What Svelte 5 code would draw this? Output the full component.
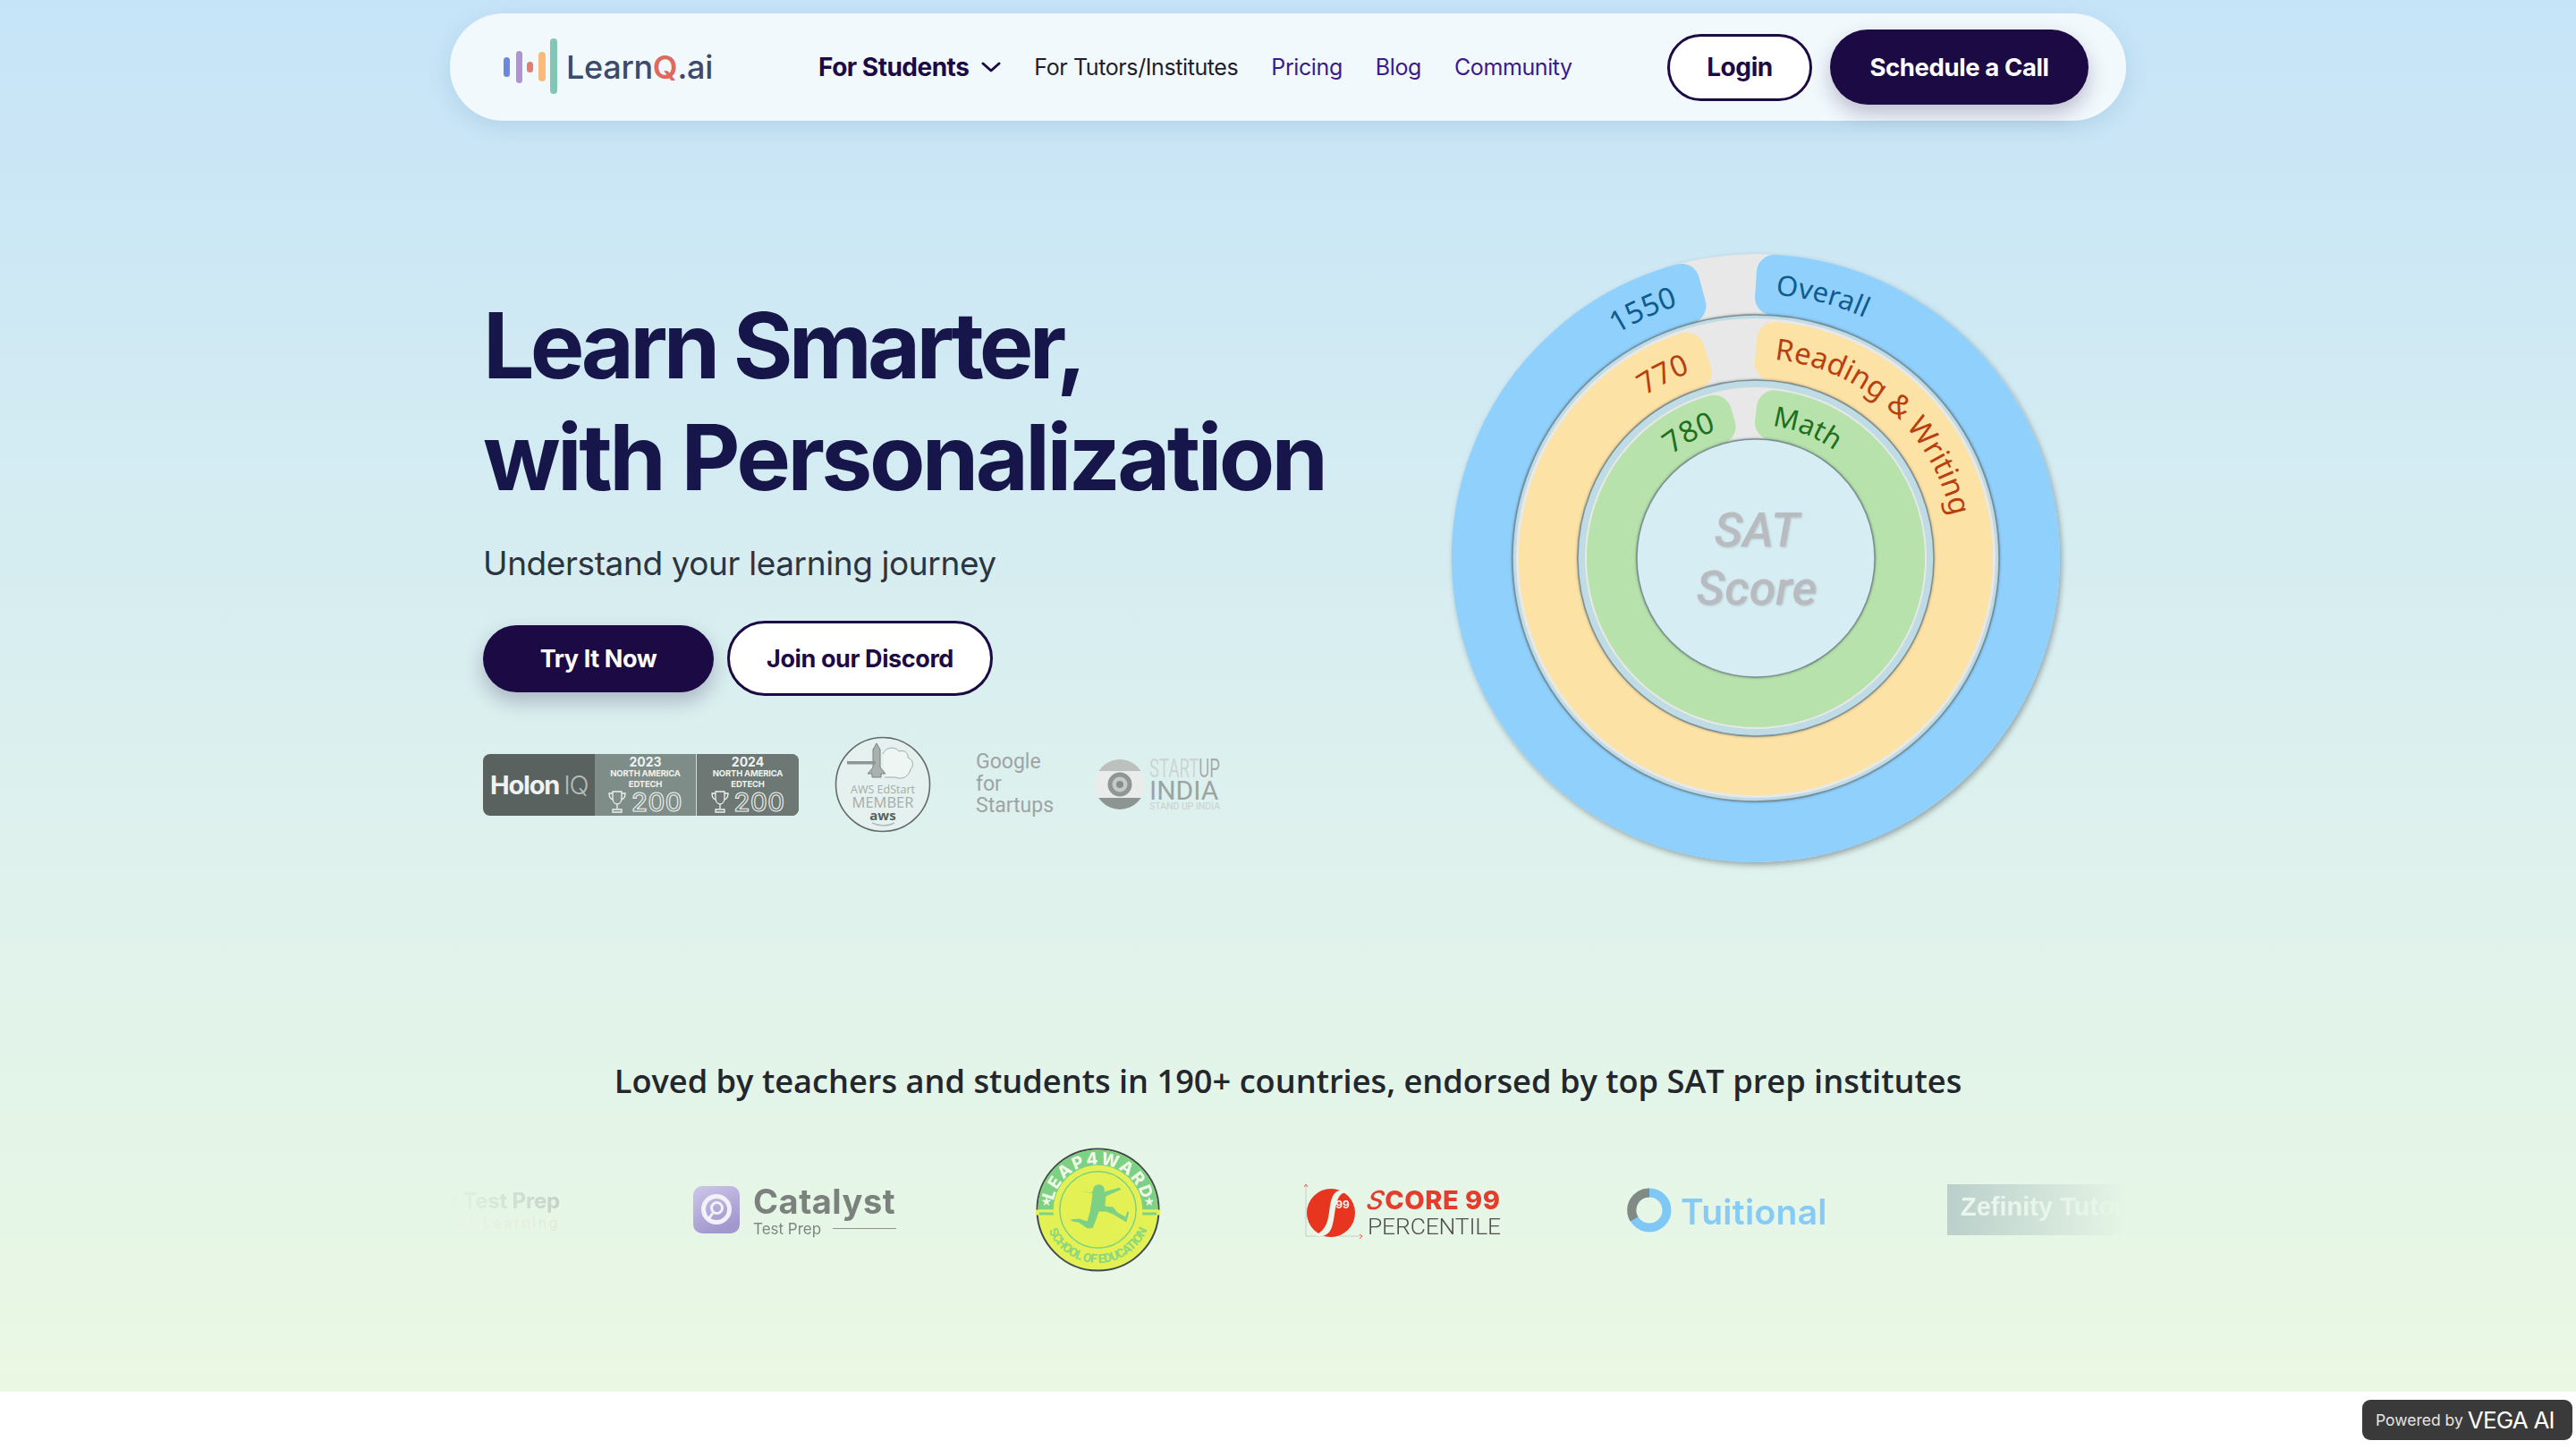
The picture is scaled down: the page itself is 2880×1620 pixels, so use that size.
<script>
  const C = 350;
  const pt = (r, a) => {
    const t = ((a - 90) * Math.PI) / 180;
    return [C + r * Math.cos(t), C + r * Math.sin(t)];
  };
  const arc = (r, a0, a1) => {
    const [x0, y0] = pt(r, a0);
    const [x1, y1] = pt(r, a1);
    return `M${x0.toFixed(2)} ${y0.toFixed(2)}A${r} ${r} 0 ${Math.abs(a1 - a0) > 180 ? 1 : 0} 1 ${x1.toFixed(2)} ${y1.toFixed(2)}`;
  };
  const sector = (ro, ri, a0, a1, c) => {
    const rO = ro - c, rI = ri + c;
    const m = (ro + ri) / 2;
    const d = (c / m) * (180 / Math.PI);
    const s = a0 + d, e = a1 - d;
    const [x0, y0] = pt(rO, s), [x1, y1] = pt(rO, e), [x2, y2] = pt(rI, e), [x3, y3] = pt(rI, s);
    return `M${x0} ${y0}A${rO} ${rO} 0 1 1 ${x1} ${y1}L${x2} ${y2}A${rI} ${rI} 0 1 0 ${x3} ${y3}Z`;
  };
  const rings = [
    { cls: 'blue', ro: 340, ri: 272, end: 348.75, disc: 272, track: 340, label: 'Overall', lr: 295, la: 4.3, score: '1550', sr: 295, sa: -31.8 },
    { cls: 'gold', ro: 265, ri: 199, end: 346.5, disc: 199, track: 268, label: 'Reading & Writing', lr: 223, la: 5.4, score: '770', sr: 220, sa: -34.2 },
    { cls: 'green', ro: 189, ri: 133, end: 351, disc: 133, track: 191, label: 'Math', lr: 149, la: 7, score: '780', sr: 149, sa: -39 }
  ];
  const awards = ['2023', '2024'];
</script>

<div class="page">
  <nav class="nav">
    <a class="brand" href="#top">
      <svg class="brand-mark" viewBox="0 0 62 64" aria-hidden="true">
        <rect x="0" y="21" width="7" height="22" rx="3.5" fill="#6d88da" />
        <rect x="14" y="14" width="7" height="36" rx="3.5" fill="#b192d2" />
        <rect x="26" y="26" width="7" height="12" rx="3.5" fill="#e27d72" />
        <rect x="39" y="15" width="8" height="33" rx="4" fill="#f8bb7c" />
        <rect x="52" y="0" width="8" height="62" rx="4" fill="#84c6b6" />
      </svg>
      <span>Learn<b>Q</b>.ai</span>
    </a>
    <div class="links">
      <a class="strong" href="#top">For Students
        <svg class="chev" viewBox="0 0 22 12" aria-hidden="true"><path d="M2 2l9 8 9-8" /></svg>
      </a>
      <a class="dark" href="#top">For Tutors/Institutes</a>
      <a href="#top">Pricing</a>
      <a href="#top">Blog</a>
      <a href="#top">Community</a>
    </div>
    <div class="actions">
      <button class="btn ghost login">Login</button>
      <button class="btn solid call">Schedule a Call</button>
    </div>
  </nav>

  <section class="hero">
    <div class="copy">
      <h1><span class="l1">Learn Smarter,</span><span class="l2">with Personalization</span></h1>
      <p class="sub">Understand your learning journey</p>
      <div class="cta">
        <button class="btn solid try">Try It Now</button>
        <button class="btn ghost join">Join our Discord</button>
      </div>
      <div class="badges">
        <div class="holon">
          <div class="holon-name">Holon<i>IQ</i></div>
          {#each awards as year, i}
            <div class="award" class:alt={i === 1}>
              <strong>{year}</strong>
              <span>NORTH AMERICA</span>
              <span>EDTECH</span>
              <div class="award-foot">
                <svg viewBox="0 0 20 25" aria-hidden="true"><path d="M5 1h10v7c0 4-2 7-5 7s-5-3-5-7zM5 3H1c0 4 1 6 4 7M15 3h4c0 4-1 6-4 7M10 15v5M5 24v-3h10v3z" /></svg>
                <em>200</em>
              </div>
            </div>
          {/each}
        </div>
        <svg class="aws" viewBox="0 0 108 108">
          <circle cx="54" cy="54" r="52.5" class="aws-disc" />
          <path class="aws-cloud" d="M54 20c3-8 14-9 18-3 6-2 11 2 10 7 6 2 7 9 3 13-2 9-10 12-17 9H56" />
          <path class="aws-fill" d="M47 8l4 7v20l6 7h-5v4h-10v-4h-5l6-7V15z" />
          <rect x="14" y="28" width="32" height="3.5" class="aws-bar" />
          <text x="54" y="64" class="aws-t1">AWS EdStart</text>
          <text x="54" y="80" class="aws-t2">MEMBER</text>
          <text x="54" y="94" class="aws-t3">aws</text>
          <path class="aws-smile" d="M42 97c8 4 18 4 25 0" />
        </svg>
        <div class="google"><span>Google</span><span>for</span><span>Startups</span></div>
        <div class="india">
          <svg viewBox="0 0 56 56" aria-hidden="true">
            <defs><clipPath id="flag"><circle cx="28" cy="28" r="28" /></clipPath></defs>
            <g clip-path="url(#flag)">
              <rect width="56" height="56" fill="#e9ecea" />
              <rect width="56" height="13" fill="#bcc1bf" />
              <rect y="43" width="56" height="13" fill="#8d9593" />
            </g>
            <circle cx="28" cy="28" r="13.5" fill="#8f9694" />
            <circle cx="28" cy="28" r="8.5" fill="#c5cac8" />
            <circle cx="28" cy="28" r="4" fill="#868e8c" />
          </svg>
          <div class="india-text">
            <div class="startup"><span>START</span><b>UP</b></div>
            <div class="india-name">INDIA</div>
            <div class="standup">STAND UP INDIA</div>
          </div>
        </div>
      </div>
    </div>

    <svg class="score" viewBox="0 0 700 700">
      <defs>
        {#each rings as r, i}
          <path id={`lab${i}`} d={arc(r.lr, r.la, r.la + 120)} />
          <path id={`num${i}`} d={arc(r.sr, r.sa, r.sa + 60)} />
        {/each}
      </defs>
      {#each rings as r, i}
        <circle cx={C} cy={C} r={r.track} class="track" class:first={i === 0} />
        <path class={`arc ${r.cls}`} d={sector(r.ro, r.ri, 0, r.end, 20)} />
        <text class={`lbl ${r.cls}-t ${r.cls}-l`}><textPath href={`#lab${i}`}>{r.label}</textPath></text>
        <text class={`num ${r.cls}-t`}><textPath href={`#num${i}`}>{r.score}</textPath></text>
        <circle cx={C} cy={C} r={r.disc} class="disc" class:core={i === 2} />
      {/each}
      <text x="351" y="337" class="sat">SAT</text>
      <text x="351" y="402" class="sat">Score</text>
    </svg>
  </section>

  <h2 class="loved">Loved by teachers and students in 190+ countries, endorsed by top SAT prep institutes</h2>

  <div class="marquee">
    <div class="logo frag">
      <div class="frag-a">Smart Test Prep</div>
      <div class="frag-b">Better Learning</div>
    </div>

    <div class="logo catalyst">
      <svg viewBox="0 0 52 53" aria-hidden="true">
        <defs><linearGradient id="cat" x1="0" y1="0" x2="0.4" y2="1"><stop offset="0" stop-color="#ccc6ea" /><stop offset="1" stop-color="#a398cd" /></linearGradient></defs>
        <rect width="52" height="53" rx="10" fill="url(#cat)" />
        <circle cx="26" cy="26" r="14.5" class="cat-ring" />
        <circle cx="26.5" cy="24.5" r="6" class="cat-ring thin" />
        <path d="M22 30l-5 7" class="cat-ring thin" />
      </svg>
      <div class="cat-text">
        <div class="cat-name">Catalyst</div>
        <div class="cat-sub"><span>Test Prep</span><i></i></div>
      </div>
    </div>

    <svg class="logo leap" viewBox="0 0 140 140">
      <defs>
        <clipPath id="leapTop"><rect width="140" height="70" /></clipPath>
        <path id="leapA" d="M19 70a51 51 0 0 1 102 0" />
        <path id="leapB" d="M10 70a60 60 0 0 0 120 0" />
      </defs>
      <circle cx="70" cy="70" r="68.5" class="leap-base" />
      <circle cx="70" cy="70" r="67.5" class="leap-green" clip-path="url(#leapTop)" />
      <circle cx="70" cy="70" r="50" class="leap-yellow" />
      <rect x="0" y="70" width="140" height="6" class="leap-yellow" />
      <circle cx="70" cy="70" r="43" class="leap-ring" />
      <rect x="4" y="73" width="16" height="3" class="leap-mark" />
      <rect x="120" y="73" width="16" height="3" class="leap-mark" />
      <text class="leap-w"><textPath href="#leapA" startOffset="50%">LEAP4WARD</textPath></text>
      <text x="12" y="65" class="leap-star">★</text>
      <text x="128" y="65" class="leap-star">★</text>
      <text class="leap-g"><textPath href="#leapB" startOffset="50%">SCHOOL OF EDUCATION</textPath></text>
      <circle cx="71" cy="48" r="6.5" class="leap-mark" />
      <path class="leap-mark" d="M47 48l14 3 3-2 12 1 18-5 2 2-17 8-1 11 9 1 5 6 9 5 2-6 2 1-3 11-15-9-8-3-8 0-3 9-4 10-6 0-10-7-7-1-2-2 10-1 9 3 3-11 2-12 1-9-12-2z" />
    </svg>

    <div class="logo score99">
      <svg viewBox="0 0 66 66" aria-hidden="true">
        <path class="axis" d="M2 3v57h62" />
        <path class="axis-r" d="M0 5l2-3 2 3M62 58l3 2-3 3" />
        <circle cx="30" cy="34" r="27" fill="#e8351f" />
        <path d="M46 8c-12 0-15 6-17 18-2 13-2 27-17 33 8 3 16 0 19-9 3-9 3-20 6-29 2-7 6-11 16-10z" fill="#eef6ea" />
        <text x="43" y="29" class="s99">99</text>
      </svg>
      <div class="s-text">
        <div class="s-title"><span>S</span>CORE 99</div>
        <div class="s-sub">PERCENTILE</div>
      </div>
    </div>

    <div class="logo tuitional">
      <svg viewBox="0 0 50 50" aria-hidden="true">
        <circle cx="25" cy="25" r="19.5" class="t-blue" />
        <path d="M25 5.5A19.5 19.5 0 0 0 8 35" class="t-gray" />
      </svg>
      <span>Tuitional</span>
    </div>

    <div class="logo zefinity"><span>Zefinity Tutoring</span></div>
  </div>
</div>

<div class="powered"><span>Powered by</span><b>VEGA AI</b></div>

<style>
  :global(body) { margin: 0; background: #fff; }
  .page {
    height: 1556px;
    background: linear-gradient(180deg, #c6e4f8 0%, #dcf0ee 55%, #eaf8e3 100%);
    display: flex;
    flex-direction: column;
    align-items: center;
    font-family: Inter, "Liberation Sans", sans-serif;
    overflow: hidden;
  }
  a { text-decoration: none; color: inherit; }

  .nav {
    box-sizing: border-box;
    width: 1874px;
    height: 120px;
    margin-top: 15px;
    padding: 0 42px 0 60px;
    display: flex;
    align-items: center;
    background: #f2f9fd;
    border-radius: 60px;
    box-shadow: 0 8px 26px rgba(70, 120, 170, 0.16);
    flex-shrink: 0;
  }
  .brand { display: flex; align-items: center; gap: 8px; width: 352px; font-size: 36px; font-weight: 500; color: #3c4b6c; letter-spacing: -0.3px; }
  .brand b { color: #e0695f; font-weight: 600; }
  .brand-mark { width: 62px; height: 64px; }
  .links { display: flex; align-items: center; gap: 37px; font-size: 25px; color: #3c1a8a; letter-spacing: -0.4px; }
  .links .dark { color: #1e1e2c; }
  .links .strong { display: flex; align-items: center; gap: 14px; font-weight: 700; color: #1c0a45; font-size: 28px; letter-spacing: -0.5px; }
  .chev { width: 22px; height: 12px; fill: none; stroke: #1c0a45; stroke-width: 3; stroke-linecap: round; stroke-linejoin: round; }
  .actions { margin-left: auto; display: flex; align-items: center; gap: 20px; }

  .btn { font-family: inherit; font-weight: 700; font-size: 27px; border-radius: 999px; cursor: pointer; letter-spacing: -0.4px; padding: 0; box-sizing: border-box; }
  .solid { background: #1c0a45; color: #fff; border: 0; box-shadow: 0 10px 22px rgba(28, 10, 69, 0.25); }
  .ghost { background: #fff; color: #1c0a45; border: 3px solid #1c0a45; }
  .login { width: 162px; height: 75px; font-size: 28px; }
  .call { width: 289px; height: 84px; font-size: 27.5px; }

  .hero { width: 1874px; display: flex; margin-top: 139px; flex-shrink: 0; }
  .copy { box-sizing: border-box; width: 1110px; padding: 50px 0 0 37px; }
  h1 { margin: 0; font-size: 102px; line-height: 125px; font-weight: 700; color: #16164a; }
  h1 span { display: block; white-space: nowrap; }
  .l1 { letter-spacing: -4.8px; }
  .l2 { letter-spacing: -3.6px; }
  .sub { margin: 32px 0 0; font-size: 37px; line-height: 48px; color: #2c3440; letter-spacing: -0.4px; }
  .cta { display: flex; align-items: center; gap: 15px; margin-top: 40px; }
  .try { width: 258px; height: 75px; }
  .join { width: 297px; height: 84px; }

  .badges { display: flex; align-items: center; margin-top: 45px; height: 108px; }
  .holon { display: flex; width: 353px; height: 69px; border-radius: 8px; overflow: hidden; color: #eef3f1; background: #59625f; }
  .holon-name { width: 125px; box-sizing: border-box; padding-left: 8px; font-size: 29px; font-weight: 700; line-height: 69px; letter-spacing: -1.2px; white-space: nowrap; }
  .holon-name i { font-style: normal; font-weight: 300; color: #b4bbb8; margin-left: 5px; }
  .award { width: 114px; background: #7f8d89; display: flex; flex-direction: column; align-items: center; border-right: 1.5px solid #d4dcd9; box-sizing: border-box; padding-top: 1px; }
  .award.alt { background: #6d7773; border-right: 0; }
  .award strong { font-size: 14px; line-height: 15px; }
  .award span { font-size: 9.5px; font-weight: 700; line-height: 12px; letter-spacing: -0.2px; white-space: nowrap; }
  .award-foot { display: flex; align-items: center; gap: 6px; height: 27px; }
  .award-foot svg { width: 20px; height: 25px; fill: none; stroke: #eef3f1; stroke-width: 1.3; }
  .award-foot em { font-style: normal; font-size: 29px; line-height: 27px; font-weight: 500; color: transparent; -webkit-text-stroke: 1.1px #eef3f1; letter-spacing: 0.5px; }

  .aws { width: 108px; height: 108px; margin-left: 40px; }
  .aws-disc { fill: #e5f1ee; stroke: #626c6a; stroke-width: 1.6; }
  .aws-cloud { fill: #eef5f3; stroke: #a2aaa8; stroke-width: 1; }
  .aws-fill { fill: #a9b1af; stroke: #7b8482; stroke-width: 1; }
  .aws-bar { fill: #8d9694; }
  .aws-t1, .aws-t2, .aws-t3 { text-anchor: middle; font-family: "Open Sans", sans-serif; fill: #a5acaa; }
  .aws-t1 { font-size: 12.5px; }
  .aws-t2 { font-size: 16.5px; }
  .aws-t3 { font-size: 15px; font-weight: 700; fill: #59625f; }
  .aws-smile { fill: none; stroke: #b4bbb9; stroke-width: 1.5; }

  .google { display: flex; flex-direction: column; margin-left: 50px; font-family: Roboto, sans-serif; font-size: 23px; line-height: 24.5px; color: #9ea4a3; width: 133px; }
  .india { display: flex; align-items: center; gap: 5px; }
  .india svg { width: 56px; height: 56px; }
  .india-text { display: flex; flex-direction: column; width: 78px; font-family: Roboto, sans-serif; color: #9ca3a1; }
  .startup { font-size: 29px; line-height: 24px; color: #cdd4d2; white-space: nowrap; transform: scaleX(0.64); transform-origin: left center; }
  .startup b { font-weight: 400; color: #a6acab; }
  .india-name { font-size: 30px; line-height: 26px; }
  .standup { font-size: 10.5px; line-height: 10px; color: #c8d0ce; white-space: nowrap; }

  .score { width: 700px; height: 700px; flex-shrink: 0; }
  .track { fill: #e8e8e8; }
  .track.first { filter: drop-shadow(2px 3px 3px rgba(40, 50, 60, 0.4)); }
  .disc { fill: #bfdbe4; stroke: rgba(105, 125, 135, 0.75); stroke-width: 1.5; filter: drop-shadow(0 0 1.5px rgba(30, 40, 50, 0.5)); }
  .disc.core { fill: #d5edf3; }
  .arc { stroke-width: 40; stroke-linejoin: round; }
  .blue { fill: #90d0fc; stroke: #90d0fc; }
  .gold { fill: #fde2a6; stroke: #fde2a6; }
  .green { fill: #b7e2ab; stroke: #b7e2ab; }
  .lbl, .num { font-family: "Noto Sans", sans-serif; font-size: 31px; }
  .num { font-size: 33px; }
  .gold-l { font-size: 33px; }
  .blue-t { fill: #0f5b8e; }
  .gold-t { fill: #b8400e; }
  .green-t { fill: #1f6f1f; }
  .sat { font-family: Roboto, sans-serif; font-size: 54px; font-style: italic; font-weight: 500; fill: #b8bbbf; text-anchor: middle; filter: drop-shadow(1px 1px 1px rgba(120, 120, 120, 0.3)); }

  .loved { margin: 210px 0 0; font-family: "Open Sans", sans-serif; font-size: 36.2px; line-height: 48px; font-weight: 600; color: #23262c; flex-shrink: 0; }

  .marquee {
    width: 1874px;
    height: 139px;
    margin-top: 51px;
    display: flex;
    align-items: center;
    gap: 140px;
    overflow: hidden;
    flex-shrink: 0;
    -webkit-mask-image: linear-gradient(90deg, transparent, #000 15%, #000 85%, transparent);
    mask-image: linear-gradient(90deg, transparent, #000 15%, #000 85%, transparent);
  }
  .logo { flex-shrink: 0; box-sizing: border-box; }
  .frag { width: 132px; padding-right: 9px; overflow: hidden; display: flex; flex-direction: column; align-items: flex-end; white-space: nowrap; }
  .frag-a { font-size: 24px; font-weight: 700; color: #9aa39f; letter-spacing: -0.2px; }
  .frag-b { font-size: 16px; color: #e7d3b4; letter-spacing: 2.5px; }

  .catalyst { width: 243px; display: flex; align-items: center; gap: 15px; }
  .catalyst svg { width: 52px; height: 53px; }
  .cat-ring { fill: none; stroke: #f3f1fa; stroke-width: 5; }
  .cat-ring.thin { stroke-width: 3; }
  .cat-text { width: 160px; }
  .cat-name { font-size: 38px; font-weight: 700; line-height: 42px; color: #7b827d; letter-spacing: 0.5px; }
  .cat-sub { display: flex; align-items: center; gap: 13px; font-size: 17px; line-height: 20px; color: #7f8682; }
  .cat-sub i { flex: 1; height: 1.5px; background: #8d9490; }

  .leap { width: 139px; height: 139px; }
  .leap-base { fill: #e3f155; stroke: #3f4b4e; stroke-width: 2; }
  .leap-green { fill: #7dd184; }
  .leap-yellow { fill: #e3f155; }
  .leap-ring { fill: none; stroke: #7dd184; stroke-width: 1.5; }
  .leap-mark { fill: #7dd184; }
  .leap-w { font-size: 19px; font-weight: 800; fill: #eef8e4; text-anchor: middle; letter-spacing: 2px; }
  .leap-g { font-family: Roboto, sans-serif; font-size: 14px; font-weight: 800; fill: #8ed67b; text-anchor: middle; letter-spacing: -0.8px; }
  .leap-star { font-size: 14px; fill: #eef8e4; text-anchor: middle; font-family: "DejaVu Sans", sans-serif; }

  .score99 { width: 242px; padding-left: 21px; display: flex; align-items: center; }
  .score99 svg { width: 66px; height: 66px; flex-shrink: 0; margin-top: 4px; }
  .axis { fill: none; stroke: #c6cdc6; stroke-width: 1; }
  .axis-r { fill: none; stroke: #e35a48; stroke-width: 1; }
  .s99 { font-size: 12px; font-weight: 700; fill: #f4f4f4; text-anchor: middle; }
  .s-text { display: flex; flex-direction: column; margin: 6px 0 0 5px; }
  .s-title { font-size: 29px; line-height: 30px; font-weight: 800; color: #e63c2e; letter-spacing: 0.5px; white-space: nowrap; }
  .s-title span { display: inline-block; transform: skewX(-20deg); font-weight: 500; }
  .s-sub { font-family: Roboto, sans-serif; font-size: 26.5px; line-height: 27px; font-weight: 300; color: #4e4e4e; white-space: nowrap; letter-spacing: -0.2px; }

  .tuitional { width: 218px; display: flex; align-items: center; gap: 10px; color: #86cbf6; font-size: 39px; font-weight: 600; letter-spacing: 0.3px; }
  .tuitional svg { width: 50px; height: 50px; flex-shrink: 0; }
  .tuitional span { margin-top: 4px; }
  .t-blue { fill: none; stroke: #7fc8f5; stroke-width: 10; }
  .t-gray { fill: none; stroke: #828a85; stroke-width: 10; }

  .zefinity { width: 360px; height: 57px; background: #a9c0c0; color: #edf7f0; font-family: "Liberation Sans", sans-serif; font-size: 29px; font-weight: 700; line-height: 50px; padding-left: 15px; white-space: nowrap; }

  .powered {
    position: fixed;
    left: 2641px;
    top: 1565px;
    width: 235px;
    height: 45px;
    box-sizing: border-box;
    padding-left: 15px;
    display: flex;
    align-items: center;
    gap: 5px;
    background: #3a3a3a;
    border-radius: 9px;
    color: #e4e4e4;
    font-family: Inter, sans-serif;
    font-size: 17.5px;
    white-space: nowrap;
  }
  .powered b { font-weight: 400; font-size: 26px; color: #fff; letter-spacing: -0.8px; }
</style>
